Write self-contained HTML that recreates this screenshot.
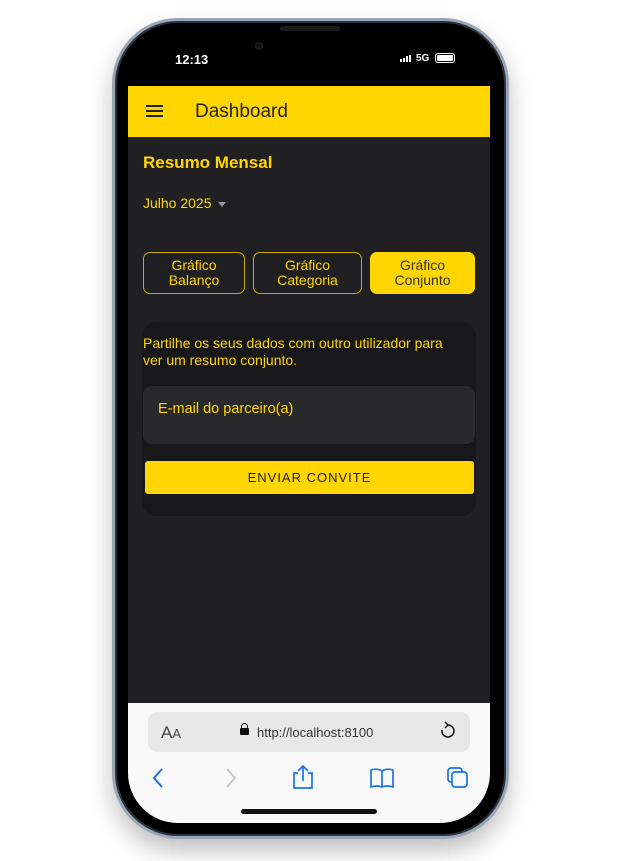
<!DOCTYPE html>
<html><head><meta charset="utf-8"><style>
*{margin:0;padding:0;box-sizing:border-box}
body{width:626px;height:861px;background:#fff;font-family:"Liberation Sans",Arial,sans-serif;position:relative;overflow:hidden}
.phone{position:absolute;left:112px;top:18px;width:397px;height:821px;border-radius:66px;background:#000;border:3px solid #9aa6b6;box-shadow:0 12px 24px rgba(0,0,0,.25),inset 0 0 0 2px #2a3340}
.screen{position:absolute;left:128px;top:33px;width:362px;height:790px;border-radius:50px;overflow:hidden;background:#000}
.abs{position:absolute}
</style></head><body>
<div class="phone"></div>
<div class="abs" style="left:280px;top:26px;width:60px;height:5px;border-radius:3px;background:#1a1a1a"></div>
<div class="screen">
 <div class="abs" style="left:47px;top:19px;color:#fff;font-weight:bold;font-size:13px">12:13</div>
 <div class="abs" style="left:127px;top:9px;width:8px;height:8px;border-radius:50%;background:#111;border:1px solid #222"></div>
 <div class="abs" style="left:272px;top:22px;display:flex;align-items:flex-end;gap:1px">
  <span style="width:2px;height:3px;background:#fff"></span><span style="width:2px;height:4px;background:#fff"></span><span style="width:2px;height:6px;background:#fff"></span><span style="width:2px;height:7px;background:#fff"></span></div>
 <div class="abs" style="left:288px;top:20px;color:#fff;font-weight:bold;font-size:10px">5G</div>
 <div class="abs" style="left:307px;top:20px;width:20px;height:10px;border:1.5px solid #fff;border-radius:3px;padding:1px"><div style="background:#fff;width:100%;height:100%;border-radius:1px"></div></div>
 <div class="abs" style="left:0;top:53px;width:362px;height:51px;background:#ffd600"></div>
 <div class="abs" style="left:18px;top:72px;width:17px;height:2px;background:#222;box-shadow:0 5px 0 #222,0 10px 0 #222"></div>
 <div class="abs" style="left:67px;top:68px;font-size:19px;color:#222">Dashboard</div>
 <div class="abs" style="left:0;top:104px;width:362px;height:566px;background:#202022"></div>
 <div class="abs" style="left:15px;top:120px;font-size:17px;font-weight:bold;color:#ffd600">Resumo Mensal</div>
 <div class="abs" style="left:15px;top:162px;font-size:14px;color:#ffd600">Julho 2025 <span style="display:inline-block;border-left:4px solid transparent;border-right:4px solid transparent;border-top:5px solid #999;vertical-align:middle;margin-left:3px"></span></div>
 <div class="abs" style="left:15px;top:219px;width:102px;height:42px;border:1px solid #c9a800;border-radius:7px;color:#ffd600;font-size:14px;text-align:center;line-height:15px;padding-top:5px">Gráfico<br>Balanço</div>
 <div class="abs" style="left:125px;top:219px;width:109px;height:42px;border:1px solid #c9a800;border-radius:7px;color:#ffd600;font-size:14px;text-align:center;line-height:15px;padding-top:5px">Gráfico<br>Categoria</div>
 <div class="abs" style="left:242px;top:219px;width:105px;height:42px;background:#ffd600;border-radius:7px;color:#333;font-size:14px;text-align:center;line-height:15px;padding-top:6px">Gráfico<br>Conjunto</div>
 <div class="abs" style="left:14px;top:289px;width:334px;height:194px;background:#18181a;border-radius:14px"></div>
 <div class="abs" style="left:15px;top:302px;width:322px;font-size:14px;line-height:17px;color:#ffd600">Partilhe os seus dados com outro utilizador para ver um resumo conjunto.</div>
 <div class="abs" style="left:15px;top:353px;width:332px;height:58px;background:#29292b;border-radius:9px"></div>
 <div class="abs" style="left:30px;top:368px;font-size:14.5px;color:#ffd600">E-mail do parceiro(a)</div>
 <div class="abs" style="left:17px;top:428px;width:329px;height:33px;background:#ffd600;border-radius:3px;color:#222;font-size:13px;letter-spacing:1px;text-align:center;line-height:33px">ENVIAR CONVITE</div>
 <div class="abs" style="left:0;top:670px;width:362px;height:120px;background:#f9f9f9"></div>
 <div class="abs" style="left:20px;top:679px;width:322px;height:40px;background:#e8e8e8;border-radius:9px"></div>
 <div class="abs" style="left:33px;top:690px;font-size:17px;color:#444">A<span style="font-size:13px">A</span></div>
 <div class="abs" style="left:112px;top:695px;width:9px;height:7px;background:#111;border-radius:1px"></div>
 <div class="abs" style="left:113px;top:690px;width:7px;height:7px;border:1.5px solid #111;border-bottom:none;border-radius:4px 4px 0 0"></div>
 <div class="abs" style="left:129px;top:692px;font-size:13px;color:#333">http://localhost:8100</div>
 <svg class="abs" style="left:310px;top:688px" width="18" height="20" viewBox="0 0 18 20"><path d="M10 4 A6 6 0 1 1 4 9" fill="none" stroke="#111" stroke-width="1.5"/><path d="M7 1 L10 4 L7 7" fill="none" stroke="#111" stroke-width="1.5"/></svg>
 <svg class="abs" style="left:0;top:730px" width="362" height="30" viewBox="0 0 362 30">
  <path d="M34 6 L26 15 L34 24" fill="none" stroke="#1a73e8" stroke-width="2"/>
  <path d="M99 6 L107 15 L99 24" fill="none" stroke="#c8c8c8" stroke-width="2"/>
  <path d="M170 10 H166 V25 H184 V10 H180 M175 18 V3 M170 8 L175 3 L180 8" fill="none" stroke="#1a73e8" stroke-width="1.7"/>
  <path d="M243 7 Q249 5 254 8 Q259 5 265 7 V24 Q259 22 254 24 Q249 22 243 24 Z M254 8 V24" fill="none" stroke="#1a73e8" stroke-width="1.7"/>
  <rect x="320" y="5" width="14" height="14" rx="3" fill="none" stroke="#1a73e8" stroke-width="1.7"/>
  <rect x="324" y="9" width="15" height="15" rx="3" fill="#f9f9f9" stroke="#1a73e8" stroke-width="1.7"/>
 </svg>
 <div class="abs" style="left:113px;top:776px;width:136px;height:5px;border-radius:3px;background:#111"></div>
</div>
</body></html>
